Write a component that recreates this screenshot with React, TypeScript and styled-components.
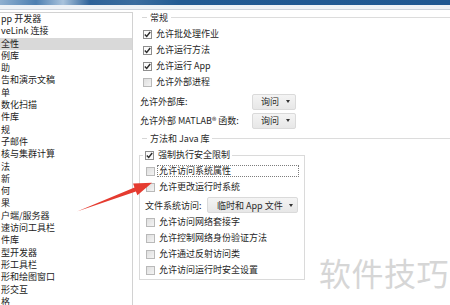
import React from 'react';
import styled, { createGlobalStyle } from 'styled-components';

const GlobalStyle = createGlobalStyle`
  html, body {
    margin: 0;
    padding: 0;
    background: #ffffff;
  }
  body {
    font-family: "Noto Sans CJK SC", "Noto Sans", "Liberation Sans", sans-serif;
    font-size: 9px;
    color: #262626;
  }
`;

const navItems = [
  'pp 开发器',
  'veLink 连接',
  '全性',
  '例库',
  '助',
  '告和演示文稿',
  '单',
  '数化扫描',
  '件库',
  '规',
  '子邮件',
  '核与集群计算',
  '法',
  '新',
  '何',
  '果',
  '户端/服务器',
  '速访问工具栏',
  '件库',
  '型开发器',
  '形工具栏',
  '形和绘图窗口',
  '形交互',
  '格',
];

type CheckItem = { label: string; checked?: boolean; focused?: boolean };

const generalChecks: CheckItem[] = [
  { label: '允许批处理作业', checked: true },
  { label: '允许运行方法', checked: true },
  { label: '允许运行 App', checked: true },
  { label: '允许外部进程' },
];

const javaTopChecks: CheckItem[] = [
  { label: '允许访问系统属性', focused: true },
  { label: '允许更改运行时系统' },
];

const javaBottomChecks: CheckItem[] = [
  { label: '允许访问网络套接字' },
  { label: '允许控制网络身份验证方法' },
  { label: '允许通过反射访问类' },
  { label: '允许访问运行时安全设置' },
];

const Check: React.FC<{ checked?: boolean }> = ({ checked }) => (
  <CheckBox $checked={checked}>
    {checked && (
      <svg width="7" height="7" viewBox="0 0 7 7">
        <path d="M0.8 3.4 L2.7 5.4 L6.2 1" fill="none" stroke="#2b2b2b" strokeWidth="1.4" />
      </svg>
    )}
  </CheckBox>
);

const CheckLine: React.FC<CheckItem> = ({ label, checked, focused }) => (
  <CheckRow>
    <Check checked={checked} />
    <CheckText $focused={focused}>{label}</CheckText>
  </CheckRow>
);

const App: React.FC = () => {
  return (
    <Page>
      <GlobalStyle />
      <TitleBar />
      <TitleShadow />
      <Body>
        <NavPanel>
          {navItems.map((item, i) => (
            <NavItem key={i} $selected={i === 2}>
              {item}
            </NavItem>
          ))}
        </NavPanel>
        <Settings>
          <GroupTitle>
            <ShortLine />
            <GroupText>常规</GroupText>
            <LongLine />
          </GroupTitle>
          <CheckList>
            {generalChecks.map((c) => (
              <CheckLine key={c.label} {...c} />
            ))}
          </CheckList>
          <SelectList>
            <SelectRow>
              <SelectLabel $width={112}>允许外部库:</SelectLabel>
              <Dropdown $width={44}>
                询问
                <Caret />
              </Dropdown>
            </SelectRow>
            <SelectRow>
              <SelectLabel $width={112}>允许外部 MATLAB® 函数:</SelectLabel>
              <Dropdown $width={44}>
                询问
                <Caret />
              </Dropdown>
            </SelectRow>
          </SelectList>
          <GroupTitle $top={2} $height={12}>
            <ShortLine />
            <GroupText>方法和 Java 库</GroupText>
            <LongLine />
          </GroupTitle>
          <JavaBox>
            <JavaLegend>
              <CheckRow>
                <Check checked />
                <CheckText>强制执行安全限制</CheckText>
              </CheckRow>
            </JavaLegend>
            {javaTopChecks.map((c) => (
              <CheckLine key={c.label} {...c} />
            ))}
            <FileRow>
              <SelectLabel $width={62}>文件系统访问:</SelectLabel>
              <Dropdown $width={91} $wide>
                临时和 App 文件
                <Caret />
              </Dropdown>
            </FileRow>
            {javaBottomChecks.map((c) => (
              <CheckLine key={c.label} {...c} />
            ))}
          </JavaBox>
        </Settings>
      </Body>
      <Watermark>软件技巧</Watermark>
      <ArrowLayer width="450" height="305" viewBox="0 0 450 305">
        <polygon
          points="77,211.5 134.5,187.6 133.1,183.6 152,182.8 137.4,195.2 135.9,191.4"
          fill="#e53b30"
        />
      </ArrowLayer>
    </Page>
  );
};

export default App;

const Page = styled.div`
  position: relative;
  width: 450px;
  height: 305px;
  overflow: hidden;
  background: #ffffff;
`;

const TitleBar = styled.div`
  height: 5px;
  background: linear-gradient(
    90deg,
    #8fb0d0 0%,
    #4d7fb1 8%,
    #a9c3dc 14%,
    #2d6299 20%,
    #3b6d9f 30%,
    #215a93 40%,
    #1f5892 100%
  );
`;

const TitleShadow = styled.div`
  height: 4px;
  background: #eef2f6;
  border-bottom: 1px solid #cdd4dc;
`;

const Body = styled.div`
  display: flex;
  height: 295px;
`;

const NavPanel = styled.div`
  width: 132px;
  margin-top: 2px;
  border-top: 1px solid #d2d2d2;
  border-right: 1px solid #d2d2d2;
  overflow: hidden;
`;

const NavItem = styled.div<{ $selected?: boolean }>`
  height: 12.3px;
  line-height: 12.3px;
  padding-left: 1px;
  white-space: nowrap;
  font-size: 9px;
  color: #222222;
  background: ${({ $selected }) => ($selected ? '#d9d9d9' : 'transparent')};
`;

const Settings = styled.div`
  flex: 1;
  display: flex;
  flex-direction: column;
  padding-top: 2px;
  padding-left: 7px;
`;

const GroupTitle = styled.div<{ $top?: number; $height?: number }>`
  display: flex;
  align-items: center;
  height: ${({ $height }) => $height ?? 11}px;
  margin-top: ${({ $top }) => $top ?? 0}px;
  padding-left: 2px;
`;

const ShortLine = styled.div`
  width: 5px;
  height: 1px;
  background: #d6d6d6;
`;

const LongLine = styled.div`
  flex: 1;
  height: 1px;
  background: #dcdcdc;
`;

const GroupText = styled.span`
  margin: 0 3px;
  line-height: 11px;
  color: #2a2a2a;
`;

const CheckList = styled.div`
  display: flex;
  flex-direction: column;
  margin-top: 3px;
  padding-left: 3px;
`;

const CheckRow = styled.div`
  display: flex;
  align-items: center;
  height: 16px;
  gap: 4px;
`;

const CheckBox = styled.span<{ $checked?: boolean }>`
  box-sizing: border-box;
  width: 9px;
  height: 9px;
  flex-shrink: 0;
  display: flex;
  align-items: center;
  justify-content: center;
  border: 1px solid ${({ $checked }) => ($checked ? '#8e8e8e' : '#b9b9b9')};
  background: ${({ $checked }) =>
    $checked ? '#fbfbfb' : 'linear-gradient(135deg, #dedede, #f4f4f4)'};
`;

const CheckText = styled.span<{ $focused?: boolean }>`
  white-space: nowrap;
  line-height: 10px;
  color: #262626;
  ${({ $focused }) =>
    $focused &&
    `
    flex: 1;
    margin-left: -2px;
    padding: 0 1px;
    border: 1px dotted #7d7d7d;
  `}
`;

const SelectList = styled.div`
  display: flex;
  flex-direction: column;
  margin-top: 2px;
`;

const SelectRow = styled.div`
  display: flex;
  align-items: center;
  height: 19px;
`;

const SelectLabel = styled.span<{ $width: number }>`
  width: ${({ $width }) => $width}px;
  white-space: nowrap;
  color: #262626;
`;

const Dropdown = styled.div<{ $width: number; $wide?: boolean }>`
  box-sizing: border-box;
  width: ${({ $width }) => $width}px;
  height: 16px;
  display: flex;
  align-items: center;
  justify-content: space-between;
  padding: ${({ $wide }) => ($wide ? '0 4px 0 9px' : '0 5px 0 8px')};
  border: 1px solid #dadada;
  border-radius: 2px;
  background: linear-gradient(#f4f4f4, #e7e7e7);
  color: #2a2a2a;
  white-space: nowrap;
`;

const Caret = styled.span`
  width: 0;
  height: 0;
  border-left: 2.5px solid transparent;
  border-right: 2.5px solid transparent;
  border-top: 3px solid #333333;
`;

const JavaBox = styled.fieldset`
  width: 166px;
  box-sizing: border-box;
  margin: 5px 0 0 -1px;
  padding: 2px 5px 1px 6px;
  border: 1px solid #dadada;
  min-inline-size: 0;
`;

const JavaLegend = styled.legend`
  margin-left: -3px;
  padding: 0 2px;
  height: 12px;
  line-height: 12px;

  & > div {
    height: 12px;
  }
`;

const FileRow = styled.div`
  display: flex;
  align-items: center;
  height: 18px;
  margin-top: 1px;
  margin-left: -1px;
`;

const Watermark = styled.div`
  position: absolute;
  left: 319px;
  top: 252px;
  font-size: 32px;
  line-height: 40px;
  letter-spacing: 0.5px;
  color: #d6d6d6;
  white-space: nowrap;
`;

const ArrowLayer = styled.svg`
  position: absolute;
  left: 0;
  top: 0;
  pointer-events: none;
`;
